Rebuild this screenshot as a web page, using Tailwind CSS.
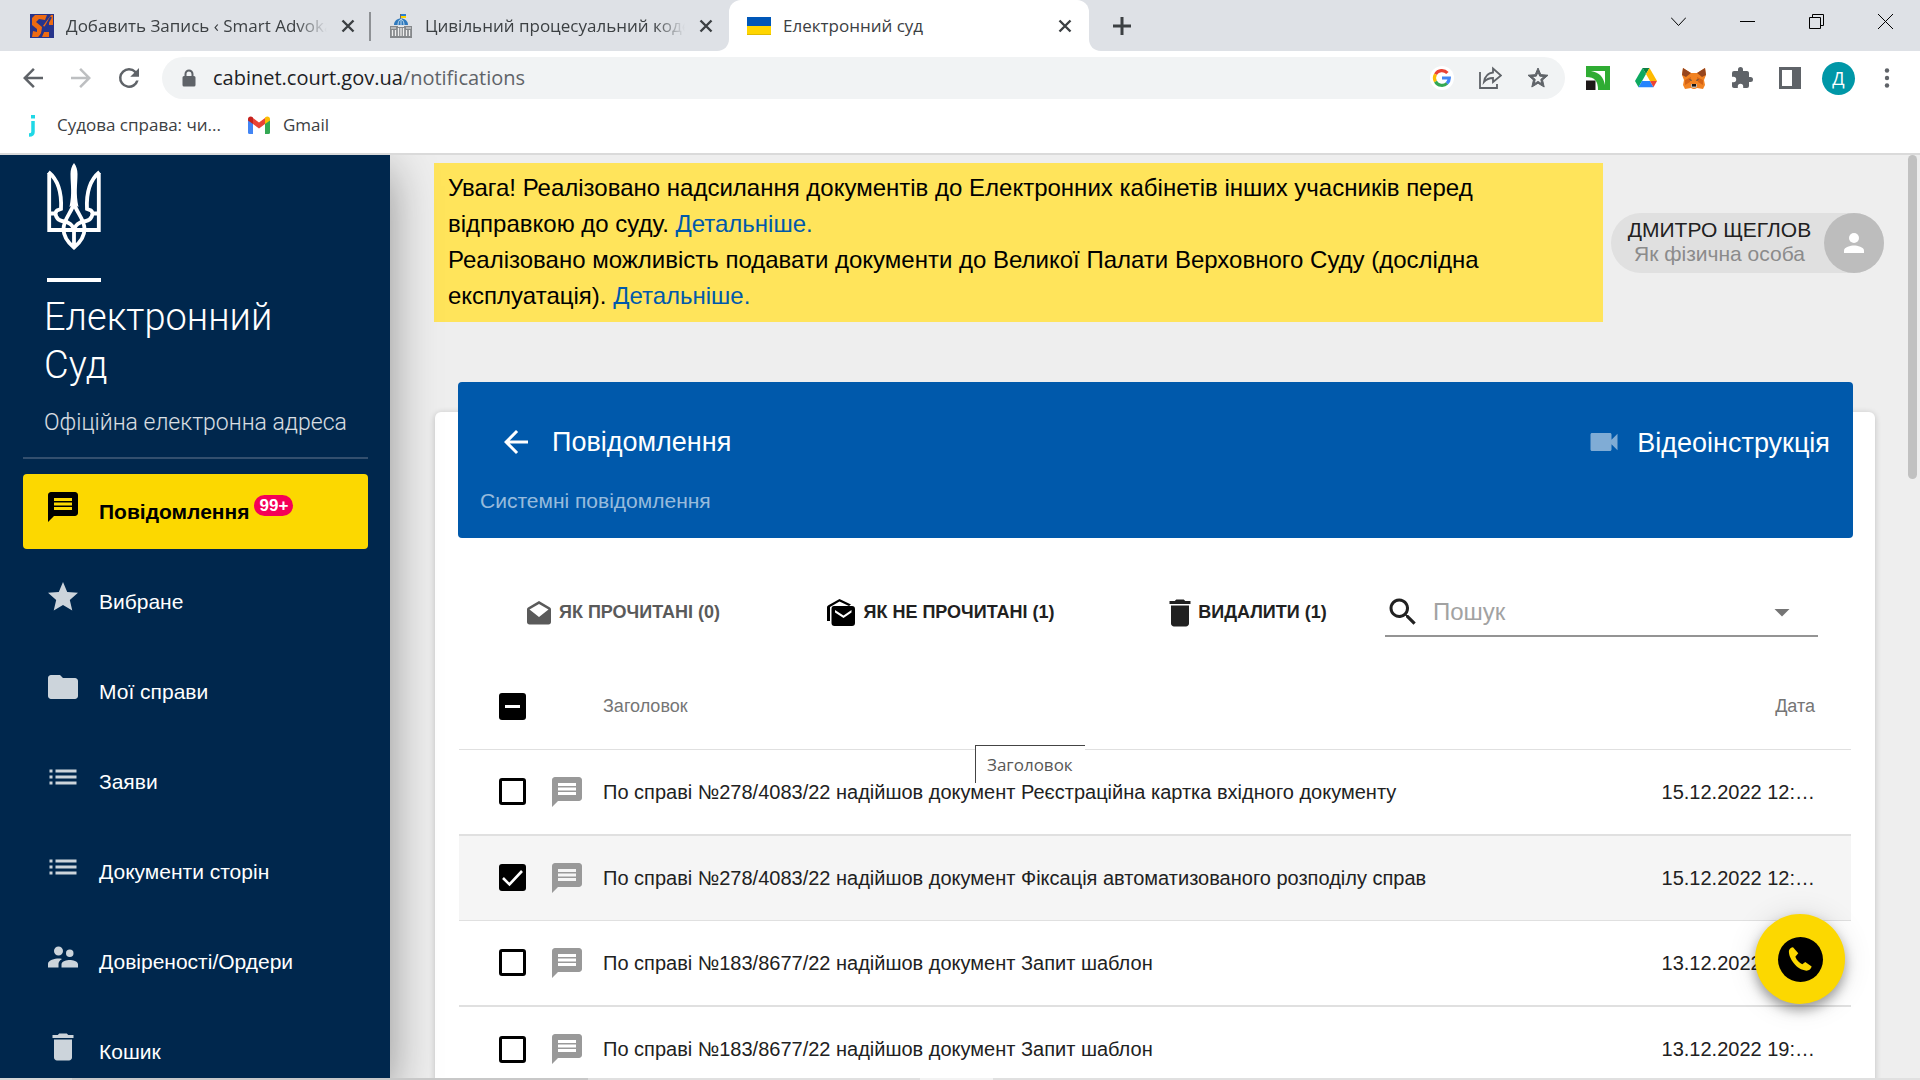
<!doctype html>
<html lang="uk">
<head>
    <meta charset="UTF-8">
    <meta name="viewport" content="width=device-width, initial-scale=1.0">
    <title>Електронний суд</title>
    <script src="https://cdn.jsdelivr.net/npm/@tailwindcss/browser@4"></script>
</head>
<body class="h-screen flex flex-col overflow-hidden bg-white font-['Liberation_Sans',Arial,sans-serif] text-[#212121]">

<svg class="hidden">
    <symbol id="comment" viewBox="0 0 24 24"><path d="M20 2H4c-1.100 0-2 .9-2 2v18l4-4h14c1.100 0 2-.9 2-2V4c0-1.100-.9-2-2-2zm-2 12H6v-2h12v2zm0-3H6V9h12v2zm0-3H6V6h12v2z"/></symbol>
    <symbol id="trash" viewBox="0 0 24 24"><path d="M6 19c0 1.100.9 2 2 2h8c1.100 0 2-.9 2-2V7H6v12zM19 4h-3.500l-1-1h-5l-1 1H5v2h14V4z"/></symbol>
    <symbol id="list" viewBox="0 0 24 24"><path d="M3 13h2v-2H3v2zm0 4h2v-2H3v2zm0-8h2V7H3v2zm4 4h14v-2H7v2zm0 4h14v-2H7v2zM7 7v2h14V7H7z"/></symbol>
    <symbol id="cross" viewBox="0 0 18 18"><path d="M3.500 3.500l11 11M14.500 3.500l-11 11" fill="none" stroke="currentColor" stroke-width="2.4"/></symbol>
    <symbol id="arrow" viewBox="0 0 24 24"><path d="M20 11H7.830l5.590-5.590L12 4l-8 8 8 8 1.410-1.410L7.830 13H20v-2z"/></symbol>
</svg>

<!-- browser window -->
<header class="font-['Open_Sans','Noto_Sans',sans-serif] text-[#3c4043] shrink-0">
    <div class="h-[51px] bg-[#dee1e6] flex justify-between">
        <div class="flex pl-3">
            <div class="relative w-[359px] h-full flex items-center pl-[18px] pr-[14px] gap-3">
                <svg class="size-6 shrink-0" viewBox="0 0 24 24"><path fill="#27348b" d="M0 0h24v24H0z"/><path fill="#ee6b12" d="M5 1h12l-2 5-6-1-3 3 6 5-1 7-3 3H2l1-6 4 1v-3L2 11V4zM21 1h2v10h-4V7l-3 6-3-1zM12 23l2-5h5v5z"/><path d="M13 16h10M10 23L21 3" fill="none" stroke="#27348b" stroke-width="2"/></svg>
                <span class="flex-1 text-[17px] whitespace-nowrap overflow-hidden [mask-image:linear-gradient(to_right,black_88%,transparent)]">Добавить Запись ‹ Smart Advokat</span>
                <button class="size-[18px]" aria-label="Закрити вкладку"><svg class="size-[18px]"><use href="#cross"/></svg></button>
                <span class="absolute right-0 top-3 h-[29px] w-[2px] bg-[#8e9195]"></span>
            </div>
            <div class="w-[358px] h-full flex items-center pl-[18px] pr-[14px] gap-3">
                <svg class="size-6 shrink-0" viewBox="0 0 24 24"><path fill="#ffd500" d="M12 0h5v4h-5z"/><path fill="#2d7fd3" d="M12 0h5v2h-5z"/><path d="M11.500 0v6" stroke="#666" /><path d="M5 11c0-4 3-6.500 7-6.500s7 2.500 7 6.500z" fill="#2f79bd"/><path d="M9 11c0-3 1-5 3-6 2 1 3 3 3 6M12 5v6" stroke="#bcd9ee" fill="none"/><path d="M1 12h22v12H1z" fill="#85888b"/><path d="M2 14h5M9 12.500h6M17 14h5" stroke="#e8e8e8"/><path d="M3.500 16v6M6.500 16v6M9.500 14v8M12 14v8M14.500 14v8M17.500 16v6M20.500 16v6" stroke="#eee" stroke-width="1.300"/></svg>
                <span class="flex-1 text-[17px] whitespace-nowrap overflow-hidden [mask-image:linear-gradient(to_right,black_88%,transparent)]">Цивільний процесуальний кодекс</span>
                <button class="size-[18px]" aria-label="Закрити вкладку"><svg class="size-[18px]"><use href="#cross"/></svg></button>
            </div>
            <div class="relative w-[360px] h-full flex items-center pl-[18px] pr-[15px] gap-3 bg-white rounded-t-xl">
                <svg class="absolute -left-3 bottom-0 size-3" viewBox="0 0 12 12"><path fill="#fff" d="M12 0v12H0C7 12 12 7 12 0z"/></svg>
                <svg class="absolute -right-3 bottom-0 size-3" viewBox="0 0 12 12"><path fill="#fff" d="M0 0v12h12C5 12 0 7 0 0z"/></svg>
                <svg class="w-6 h-[18px] shrink-0" viewBox="0 0 24 18"><path fill="#0057b8" d="M0 0h24v9H0z"/><path fill="#ffd500" d="M0 9h24v9H0z"/><path d="M0 17.500h24" stroke="#dfba00"/></svg>
                <span class="flex-1 text-[17px] whitespace-nowrap">Електронний суд</span>
                <button class="size-[18px]" aria-label="Закрити вкладку"><svg class="size-[18px]"><use href="#cross"/></svg></button>
            </div>
            <button class="ml-6 w-[18px]" aria-label="Нова вкладка"><svg class="size-[18px]" viewBox="0 0 18 18"><path d="M9 0v18M0 9h18" stroke="#3c4043" stroke-width="3"/></svg></button>
        </div>
        <div class="flex items-center h-[43px] pr-[27px] gap-[54px] text-black">
            <button aria-label="Пошук вкладок"><svg class="size-[15px]" viewBox="0 0 15 15"><path d="M0 3.500l7.500 8 7.500-8" fill="none" stroke="currentColor"/></svg></button>
            <button aria-label="Згорнути"><svg class="size-[15px]" viewBox="0 0 15 15"><path d="M0 7.500h15" stroke="currentColor"/></svg></button>
            <button aria-label="Відновити"><svg class="size-[15px]" viewBox="0 0 15 15"><path d="M.5 3.500h11v11H.5zM3.500 3.500v-3h11v11h-3" fill="none" stroke="currentColor"/></svg></button>
            <button aria-label="Закрити"><svg class="size-[15px]" viewBox="0 0 15 15"><path d="M0 0l15 15M15 0L0 15" stroke="currentColor"/></svg></button>
        </div>
    </div>

    <div class="flex items-center h-[54px] pl-[18px] pr-[21px] text-[#5f6368] fill-current">
        <button class="mr-[18px]" aria-label="Назад"><svg class="size-[30px]"><use href="#arrow"/></svg></button>
        <button class="mr-[18px] text-[#bdbfc1]" aria-label="Вперед"><svg class="size-[30px] rotate-180 fill-current"><use href="#arrow"/></svg></button>
        <button class="mr-[18px]" aria-label="Оновити"><svg class="size-[30px]" viewBox="0 0 24 24"><path d="M17.650 6.350A7.960 7.960 0 0 0 12 4a8 8 0 1 0 7.730 10h-2.080A6 6 0 1 1 12 6c1.660 0 3.140.69 4.220 1.780L13 11h7V4l-2.350 2.350z"/></svg></button>
        <div class="flex-1 h-[42px] rounded-full bg-[#f1f3f4] flex items-center pl-[18px] pr-[15px]">
            <svg class="size-[18px]" viewBox="0 0 18 18"><path d="M4.500 7V5a4.500 4.500 0 0 1 9 0v2h.5a1.500 1.500 0 0 1 1.500 1.500V16a1.500 1.500 0 0 1-1.500 1.500H4A1.500 1.500 0 0 1 2.500 16V8.500A1.500 1.500 0 0 1 4 7zm2 0h5V5a2.500 2.500 0 0 0-5 0z"/></svg>
            <a href="#" class="ml-[15px] text-[20px] text-[#202124]">cabinet.court.gov.ua<span class="text-[#5f6368]">/notifications</span></a>
            <div class="ml-auto flex items-center gap-6">
                <svg class="size-6" viewBox="0 0 24 24"><circle cx="12" cy="12" r="12" fill="#fff"/><g fill="none" stroke-width="3.200"><path d="M5.500 8.200A7.400 7.400 0 0 1 17.400 7" stroke="#ea4335"/><path d="M5.500 15.600a7.400 7.400 0 0 1 0-7.400" stroke="#fbbc05"/><path d="M17 17.300a7.400 7.400 0 0 1-11.500-1.700" stroke="#34a853"/><path d="M12 12h7.300a7.400 7.400 0 0 1-2.400 5.400" stroke="#4285f4"/></g></svg>
                <button aria-label="Поділитися"><svg class="size-6" viewBox="0 0 24 24" fill="none" stroke="#5f6368" stroke-width="1.800"><path d="M2 6v16h17v-4"/><path d="M15 2.500l8 7-8 6.500v-4c-4 0-6.500 1-9 4 .8-5 3.500-9 9-9.500z"/></svg></button>
                <button aria-label="Додати закладку"><svg class="size-6" viewBox="0 0 24 24"><path d="M22 9.240l-7.190-.62L12 2 9.190 8.630 2 9.240l5.460 4.730L5.820 21 12 17.270 18.180 21l-1.630-7.030L22 9.240zM12 15.400l-3.760 2.270 1-4.280-3.320-2.880 4.380-.38L12 6.100l1.710 4.040 4.380.38-3.320 2.880 1 4.280L12 15.400z" stroke="#5f6368"/></svg></button>
            </div>
        </div>
        <div class="flex items-center gap-6 ml-[21px]">
            <svg class="size-6" viewBox="0 0 24 24"><path fill="#2fac33" d="M0 0h24v24H0z"/><path fill="#fff" d="M0 11c9 0 12 4 12 13H0z"/><path d="M5 5h14v14C17.500 11 13.500 6.500 5 5z" fill="#fff"/><path fill="#1d1818" d="M0 14.500h9.500V24H0z"/></svg>
            <svg class="size-6" viewBox="0 0 24 24"><path fill="#0da960" d="M8.500 2L1 15l3.500 6.300L12 8z"/><path fill="#0b8043" d="M8.500 2h7L12 8z"/><path fill="#ffba00" d="M15.500 2L23 15h-7L12 8z"/><path fill="#2684fc" d="M8 15h8l3.500 6.300h-15z"/><path fill="#ea4335" d="M16 15h7l-3.500 6.300z"/></svg>
            <svg class="size-6" viewBox="0 0 24 24"><path fill="#f28322" d="M1 2l8 5h6l8-5 1 7-2 5 1 5-2 4-6-1-2 1h-2l-2-1-6 1-2-4 1-5-2-5z"/><path fill="#96451d" d="M1 2l8 5-5 4-4-2zM23 2l-8 5 5 4 4-2z"/><path fill="#d56315" d="M3 14l6-3-1 5-5 3zM21 14l-6-3 1 5 5 3z"/><path fill="#394550" d="M7 13l3 1-1 1zM17 13l-3 1 1 1z"/><path fill="#c9b8a9" d="M9 18h6v3l-2 1h-2l-2-1z"/><path fill="#161616" d="M10 18h4v2.500h-4z"/></svg>
            <button aria-label="Розширення"><svg class="size-6" viewBox="0 0 24 24"><path d="M20.500 11H19V7c0-1.100-.9-2-2-2h-4V3.500a2.500 2.500 0 0 0-5 0V5H4a2 2 0 0 0-2 2v3.800h1.500a2.700 2.700 0 0 1 0 5.400H2V20c0 1.100.9 2 2 2h3.800v-1.500a2.700 2.700 0 0 1 5.400 0V22H17a2 2 0 0 0 2-2v-4h1.500a2.500 2.500 0 0 0 0-5z"/></svg></button>
            <button aria-label="Бічна панель"><svg class="size-6" viewBox="0 0 24 24"><path d="M1 1h22v22H1zM4 4v16h10V4z" fill-rule="evenodd"/></svg></button>
            <button class="size-[33px] rounded-full bg-[#0097a7] text-white text-[18px] leading-[33px] mx-[-4px]">Д</button>
            <button aria-label="Меню"><svg class="size-6" viewBox="0 0 24 24"><circle cx="12" cy="4.500" r="2.200"/><circle cx="12" cy="12" r="2.200"/><circle cx="12" cy="19.500" r="2.200"/></svg></button>
        </div>
    </div>

    <div class="flex items-center h-[50px] pb-2 pl-[21px] border-b-2 border-[#dadada] text-[17px]">
        <a href="#" class="flex items-center gap-3 mr-[26px]">
            <svg class="size-6" viewBox="0 0 24 24"><path d="M12 8v11q0 3-4 3" fill="none" stroke="#1fd8e6" stroke-width="3.500"/><path fill="#1fd8e6" d="M10 2h4v3.500h-4z"/></svg>
            Судова справа: чи...
        </a>
        <a href="#" class="flex items-center gap-3">
            <svg class="w-6 h-[18px]" viewBox="0 0 24 18"><path fill="#4285f4" d="M1 3l5 4v11H2.500A1.500 1.500 0 0 1 1 16.500z"/><path fill="#34a853" d="M23 3l-5 4v11h3.500a1.500 1.500 0 0 0 1.500-1.500z"/><path fill="#ea4335" d="M6 2l6 4.500L18 2v6l-6 4.500L6 8z"/><path fill="#c5221f" d="M1 3c0-2.500 3-3.500 5-1.500V8L1 4.500z"/><path fill="#fbbc04" d="M23 3c0-2.500-3-3.500-5-1.500V8l5-3.500z"/></svg>
            Gmail
        </a>
    </div>
</header>

<div class="relative flex flex-1 min-h-0 overflow-hidden bg-[#eee]">
    <aside class="relative w-[390px] shrink-0 bg-[#00274d] text-white pl-[23px] pr-[22px] pt-2 shadow-[0_15px_45px_rgba(0,0,0,0.4)]">
        <div class="pl-6">
            <svg class="w-[54px] h-[87px]" viewBox="0 0 54 87" fill="none" stroke="#fff" stroke-width="3.800">
                <path d="M2.200 10v57h49.600V10"/>
                <path d="M1.500 9C10 16 15 27 14 46l-4 1.500c-3.500 3 0 10 5 10.500 6 .5 12 4 12 11M52.500 9C44 16 39 27 40 46l4 1.500c3.500 3 0 10-5 10.500-6 .5-12 4-12 11M2 50.500h7M52 50.500h-7"/>
                <path d="M27 40c-2 9-10.500 16-10.500 26 0 8 5 14 10.500 18.500C32.500 80 37.500 74 37.500 66 37.500 56 29 49 27 40zM27 64v20" />
                <path fill="#fff" stroke="none" d="M27 0c2.500 3 3.500 7 3.500 11 0 11-2 19 1 33l-4.500-3-4.500 3c3-14 1-22 1-33 0-4 1-8 3.500-11z"/>
            </svg>
            <div class="w-[54px] h-1 bg-white mt-7"></div>
            <h1 class="mt-[11px] -ml-[3px] font-[Roboto] font-light text-[38px] leading-[48px]">Електронний<br>Суд</h1>
            <p class="mt-4 -ml-[3px] pb-4 font-[Roboto] font-light text-[23px] leading-[36px] text-white/85">Офіційна електронна адреса</p>
        </div>
        <nav class="border-t-2 border-[#334f6e] pt-[15px] flex flex-col gap-[15px] text-[21px] leading-[45px] [&_svg]:size-9 [&_svg]:mr-[18px]">
            <a href="#" class="flex items-start p-[15px] pl-[22px] h-[75px] rounded bg-[#fcd800] text-black font-bold">
                <svg><use href="#comment"/></svg>Повідомлення
                <span class="ml-[5px] mt-[6px] h-[21px] w-[39px] rounded-full bg-[#f50057] text-white text-[17px] leading-[21px] text-center">99+</span>
            </a>
            <a href="#" class="flex items-start p-[15px] pl-[22px] h-[75px]"><svg class="fill-white/80" viewBox="0 0 24 24"><path d="M12 17.270L18.180 21l-1.640-7.030L22 9.240l-7.190-.61L12 2 9.190 8.630 2 9.240l5.460 4.730L5.820 21z"/></svg>Вибране</a>
            <a href="#" class="flex items-start p-[15px] pl-[22px] h-[75px]"><svg class="fill-white/80" viewBox="0 0 24 24"><path d="M10 4H4c-1.100 0-2 .9-2 2v12c0 1.100.9 2 2 2h16c1.100 0 2-.9 2-2V8c0-1.100-.9-2-2-2h-8l-2-2z"/></svg>Мої справи</a>
            <a href="#" class="flex items-start p-[15px] pl-[22px] h-[75px]"><svg class="fill-white/80"><use href="#list"/></svg>Заяви</a>
            <a href="#" class="flex items-start p-[15px] pl-[22px] h-[75px]"><svg class="fill-white/80"><use href="#list"/></svg>Документи сторін</a>
            <a href="#" class="flex items-start p-[15px] pl-[22px] h-[75px]"><svg class="fill-white/80" viewBox="0 0 24 24"><path d="M16.500 12a2.500 2.500 0 1 0 0-5 2.500 2.500 0 0 0 0 5zM9 11a3 3 0 1 0 0-6 3 3 0 0 0 0 6zm7.500 3c-1.830 0-5.500.92-5.500 2.750V19h11v-2.250c0-1.830-3.670-2.750-5.500-2.750zM9 13c-2.330 0-7 1.170-7 3.500V19h7v-2.250c0-.85.33-2.340 2.370-3.470C10.500 13.100 9.660 13 9 13z"/></svg>Довіреності/Ордери</a>
            <a href="#" class="flex items-start p-[15px] pl-[22px] h-[75px]"><svg class="fill-white/80"><use href="#trash"/></svg>Кошик</a>
        </nav>
    </aside>

    <main class="flex-1 min-w-0 pl-11 pr-9 pt-2">
        <div class="flex items-center gap-2">
            <div class="flex-1 bg-[#ffe45b] text-black text-[24px] leading-9 px-[14px] pt-[7px] pb-2">
                <p>Увага! Реалізовано надсилання документів до Електронних кабінетів інших учасників перед відправкою до суду. <a href="#" class="text-[#0059ab]">Детальніше.</a></p>
                <p>Реалізовано можливість подавати документи до Великої Палати Верховного Суду (дослідна експлуатація). <a href="#" class="text-[#0059ab]">Детальніше.</a></p>
            </div>
            <button class="w-[273px] h-[60px] rounded-full bg-[#e0e0e0] flex items-center">
                <span class="flex-1 pl-1 pb-[2px] text-center text-[21px] leading-6 whitespace-nowrap">ДМИТРО ЩЕГЛОВ<br><span class="text-[#8b8b8b]">Як фізична особа</span></span>
                <span class="size-[60px] rounded-full bg-[#bdbdbd] grid place-items-center"><svg class="size-[30px] fill-white" viewBox="0 0 24 24"><circle cx="12" cy="8" r="4"/><path d="M12 14c-2.670 0-8 1.340-8 4v2h16v-2c0-2.660-5.330-4-8-4z"/></svg></span>
            </button>
        </div>

        <section class="mt-[90px] ml-px mr-[9px] h-[800px] rounded-md bg-white shadow-[0_1px_6px_rgba(0,0,0,0.2)] pl-6 pr-6">
            <div class="-mt-[30px] -ml-px inline-block w-[calc(100%+3px)] h-[156px] rounded bg-[#0059ab] text-white">
                <div class="flex items-center pt-10 pl-10 pr-[23px] text-[27px] leading-9">
                    <button aria-label="Назад"><svg class="size-9 fill-white"><use href="#arrow"/></svg></button>
                    <h2 class="ml-[18px]">Повідомлення</h2>
                    <a href="#" class="ml-auto flex items-center gap-[15px]"><svg class="size-9 fill-white/50" viewBox="0 0 24 24"><path d="M17 10.500V7c0-.55-.45-1-1-1H4c-.55 0-1 .45-1 1v10c0 .55.45 1 1 1h12c.55 0 1-.45 1-1v-3.500l4 4v-11l-4 4z"/></svg><span class="pt-[3px]">Відеоінструкція</span></a>
                </div>
                <p class="mt-6 pl-[22px] text-[21px] text-white/60">Системні повідомлення</p>
            </div>

            <div class="mt-[50px] pl-[6px] pr-[33px] grid grid-cols-[317fr_318fr_285fr_433fr] items-center text-[18px] font-bold">
                <button class="flex items-center justify-center gap-2 text-[#5a5a5a]"><svg class="size-6 fill-current" viewBox="0 0 24 24"><path d="M12 0L1 6.500C.4 7 0 7.500 0 8.300V21c0 1.500 1 2.500 2.500 2.500h19c1.500 0 2.500-1 2.500-2.500V8.300c0-.8-.4-1.300-1-1.800zM12 16L2.500 8.500 12 3l9.500 5.500z"/></svg>ЯК ПРОЧИТАНІ (0)</button>
                <button class="flex items-center justify-center gap-2"><svg class="w-7 h-[27px] fill-black" viewBox="0 0 28 27"><path d="M0 22V8.500C0 7.500.5 7 1 6.500L12.500 0 24 5.500 22 7l-9.500-4.500L3 8v14zM7 7h18q3 0 3 3v14q0 3-3 3H7.500q-3 0-3-3V10q0-3 2.500-3zm1 4v2.500l8.500 5.500 8-5.500V11l-8 5.500z"/></svg>ЯК НЕ ПРОЧИТАНІ (1)</button>
                <button class="flex items-center justify-center pl-1"><svg class="size-9 fill-[#212121]"><use href="#trash"/></svg>ВИДАЛИТИ (1)</button>
                <div class="flex items-center h-[49px] border-b-2 border-[#949494] font-normal">
                    <label for="search" class="w-12"><svg class="size-9 fill-[#212121]" viewBox="0 0 24 24"><path d="M15.500 14h-.79l-.28-.27A6.500 6.500 0 1 0 13.730 14.430l.27.28v.79l5 4.990L20.490 19l-4.990-5zm-6 0a4.500 4.500 0 1 1 0-9 4.500 4.500 0 0 1 0 9z"/></svg></label>
                    <input id="search" type="text" placeholder="Пошук" class="flex-1 min-w-0 text-[24px] placeholder:text-[#a2a2a2] outline-none">
                    <button class="mr-[18px]" aria-label="Фільтр"><svg class="size-9 fill-[#757575]" viewBox="0 0 24 24"><path d="M7 10l5 5 5-5z"/></svg></button>
                </div>
            </div>

            <div class="relative mt-[27px]">
                <table class="w-full table-fixed text-left text-[20px]">
                    <thead class="text-[18px] text-[#757575]">
                    <tr class="h-[85px] border-b border-[#e0e0e0]">
                        <th class="w-[90px] pl-10 font-normal"><span class="relative grid size-[27px]"><input type="checkbox" aria-label="Вибрати всі" class="appearance-none size-[27px] rounded-[3px] bg-black"><svg class="absolute inset-0 pointer-events-none" viewBox="0 0 27 27"><path d="M6 13.500h15" stroke="#fff" stroke-width="3"/></svg></span></th>
                        <th class="w-[54px]"></th>
                        <th class="font-normal">Заголовок</th>
                        <th class="w-[230px] pr-9 font-normal text-right">Дата</th>
                    </tr>
                    </thead>
                    <tbody>
                    <tr class="h-[86px] border-b-2 border-[#e0e0e0]">
                        <td class="pl-10"><input type="checkbox" aria-label="Вибрати" class="block appearance-none size-[27px] rounded-[3px] border-3 border-black bg-white"></td>
                        <td><svg class="size-9 fill-[#999]"><use href="#comment"/></svg></td>
                        <td class="whitespace-nowrap">По справі №278/4083/22 надійшов документ Реєстраційна картка вхідного документу</td>
                        <td class="pr-9 text-right">15.12.2022 12:…</td>
                    </tr>
                    <tr class="h-[85px] border-b border-[#e0e0e0] bg-[#f5f5f5]">
                        <td class="pl-10"><span class="relative grid size-[27px]"><input type="checkbox" checked aria-label="Вибрати" class="appearance-none size-[27px] rounded-[3px] bg-black"><svg class="absolute inset-0 pointer-events-none" viewBox="0 0 27 27"><path d="M4 14l6.500 6.500L23 7" fill="none" stroke="#fff" stroke-width="2.600"/></svg></span></td>
                        <td><svg class="size-9 fill-[#999]"><use href="#comment"/></svg></td>
                        <td class="whitespace-nowrap">По справі №278/4083/22 надійшов документ Фіксація автоматизованого розподілу справ</td>
                        <td class="pr-9 text-right">15.12.2022 12:…</td>
                    </tr>
                    <tr class="h-[86px] border-b-2 border-[#e0e0e0]">
                        <td class="pl-10"><input type="checkbox" aria-label="Вибрати" class="block appearance-none size-[27px] rounded-[3px] border-3 border-black bg-white"></td>
                        <td><svg class="size-9 fill-[#999]"><use href="#comment"/></svg></td>
                        <td class="whitespace-nowrap">По справі №183/8677/22 надійшов документ Запит шаблон</td>
                        <td class="pr-9 text-right">13.12.2022 19:…</td>
                    </tr>
                    <tr class="h-[85px]">
                        <td class="pl-10"><input type="checkbox" aria-label="Вибрати" class="block appearance-none size-[27px] rounded-[3px] border-3 border-black bg-white"></td>
                        <td><svg class="size-9 fill-[#999]"><use href="#comment"/></svg></td>
                        <td class="whitespace-nowrap">По справі №183/8677/22 надійшов документ Запит шаблон</td>
                        <td class="pr-9 text-right">13.12.2022 19:…</td>
                    </tr>
                    </tbody>
                </table>
                <div role="tooltip" class="absolute left-[516px] top-[81px] w-[110px] h-[38px] border-l border-t border-[#444] bg-white pl-[11px] font-['Open_Sans',sans-serif] text-[17px] leading-[38px] text-[#575757]">Заголовок</div>
            </div>
        </section>
    </main>

    <div class="absolute right-[3px] top-0 w-[9px] h-[324px] rounded-full bg-[#c1c1c1]"></div>
    <button class="absolute right-[75px] bottom-[74px] size-[90px] rounded-full bg-[#fcd800] grid place-items-center shadow-[0_6px_12px_rgba(0,0,0,0.35),0_2px_30px_rgba(0,0,0,0.12)]" aria-label="Зателефонувати">
        <span class="size-[45px] rounded-full bg-black grid place-items-center"><svg class="size-[28px] fill-[#fcd800]" viewBox="0 0 24 24"><path d="M2.500 5C3 3 4.500 2 6 2l4.500 5-2.500 3c1 3 3.500 5 6 6.500l2.500-2 5.500 4c-.5 2-2 3.500-4.500 3.500C9 21.500 2 11 2.500 5z"/></svg></span>
    </button>
</div>

<div class="flex h-[2px] shrink-0 bg-[#e0e0e0]">
    <div class="w-[72px] bg-[#d6d6d6]"></div>
    <div class="w-[516px] bg-[#c8c8c8]"></div>
    <div class="ml-[332px] w-[73px] bg-[#f3f3f3]"></div>
</div>
</body>
</html>
